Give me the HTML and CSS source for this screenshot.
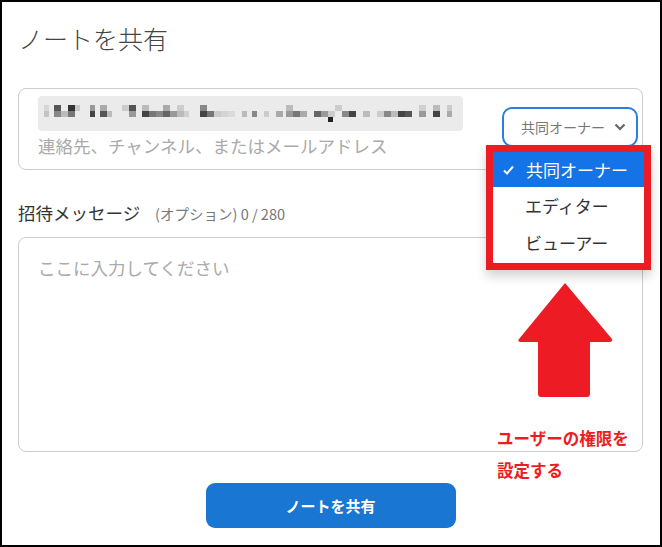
FILE: index.html
```html
<!DOCTYPE html>
<html lang="ja">
<head>
    <meta charset="UTF-8">
    <title>ノートを共有</title>
    <link rel="stylesheet" href="styles.css">
</head>
<body>
    <div class="frame">
        <h1 class="title">ノートを共有</h1>

        <div class="recipient">
            <div class="recipient-left">
                <svg class="blurred" width="425" height="35" viewBox="0 0 425 35">
                    <rect x="0" y="0" width="425" height="35" rx="4" fill="#ebebeb"/>
                    <rect x="6" y="9" width="5" height="6" fill="#d6d6d6"/>
                    <rect x="6" y="15" width="5" height="6" fill="#c4c4c4"/>
                    <rect x="16" y="9" width="7" height="6" fill="#555"/>
                    <rect x="16" y="15" width="7" height="6" fill="#888"/>
                    <rect x="23" y="15" width="7" height="6" fill="#bbb"/>
                    <rect x="30" y="9" width="7" height="6" fill="#333"/>
                    <rect x="30" y="15" width="7" height="6" fill="#777"/>
                    <rect x="37" y="9" width="5" height="6" fill="#c8c8c8"/>
                    <rect x="52" y="9" width="5" height="6" fill="#999"/>
                    <rect x="52" y="15" width="5" height="6" fill="#444"/>
                    <rect x="62" y="9" width="7" height="6" fill="#aaa"/>
                    <rect x="62" y="15" width="7" height="6" fill="#555"/>
                    <rect x="69" y="15" width="5" height="6" fill="#bbb"/>
                    <rect x="84" y="9" width="7" height="6" fill="#ccc"/>
                    <rect x="91" y="9" width="7" height="6" fill="#555"/>
                    <rect x="91" y="15" width="7" height="6" fill="#999"/>
                    <rect x="104" y="9" width="7" height="6" fill="#bbb"/>
                    <rect x="104" y="15" width="7" height="6" fill="#444"/>
                    <rect x="111" y="15" width="7" height="6" fill="#777"/>
                    <rect x="118" y="15" width="7" height="6" fill="#888"/>
                    <rect x="125" y="9" width="7" height="6" fill="#aaa"/>
                    <rect x="125" y="15" width="7" height="6" fill="#666"/>
                    <rect x="132" y="15" width="7" height="6" fill="#999"/>
                    <rect x="139" y="9" width="7" height="6" fill="#ccc"/>
                    <rect x="139" y="15" width="7" height="6" fill="#bbb"/>
                    <rect x="146" y="15" width="5" height="6" fill="#d0d0d0"/>
                    <rect x="162" y="9" width="7" height="6" fill="#888"/>
                    <rect x="162" y="15" width="7" height="6" fill="#444"/>
                    <rect x="169" y="15" width="7" height="6" fill="#777"/>
                    <rect x="176" y="15" width="7" height="6" fill="#ccc"/>
                    <rect x="183" y="15" width="7" height="6" fill="#d4d4d4"/>
                    <rect x="190" y="15" width="7" height="6" fill="#dadada"/>
                    <rect x="204" y="15" width="5" height="6" fill="#bbb"/>
                    <rect x="214" y="15" width="5" height="6" fill="#888"/>
                    <rect x="226" y="15" width="5" height="6" fill="#ccc"/>
                    <rect x="238" y="15" width="7" height="6" fill="#aaa"/>
                    <rect x="248" y="9" width="7" height="6" fill="#bbb"/>
                    <rect x="248" y="15" width="7" height="6" fill="#999"/>
                    <rect x="255" y="15" width="7" height="6" fill="#777"/>
                    <rect x="262" y="15" width="7" height="6" fill="#aaa"/>
                    <rect x="276" y="15" width="7" height="6" fill="#666"/>
                    <rect x="283" y="15" width="7" height="6" fill="#999"/>
                    <rect x="290" y="15" width="7" height="6" fill="#ccc"/>
                    <rect x="290" y="21" width="5" height="5" fill="#222"/>
                    <rect x="297" y="9" width="7" height="6" fill="#ccc"/>
                    <rect x="304" y="15" width="7" height="6" fill="#888"/>
                    <rect x="311" y="15" width="7" height="6" fill="#444"/>
                    <rect x="325" y="15" width="7" height="6" fill="#bbb"/>
                    <rect x="339" y="15" width="7" height="6" fill="#ccc"/>
                    <rect x="346" y="15" width="7" height="6" fill="#888"/>
                    <rect x="353" y="15" width="7" height="6" fill="#bbb"/>
                    <rect x="360" y="15" width="7" height="6" fill="#444"/>
                    <rect x="367" y="15" width="7" height="6" fill="#555"/>
                    <rect x="381" y="9" width="7" height="6" fill="#d0d0d0"/>
                    <rect x="381" y="15" width="7" height="6" fill="#999"/>
                    <rect x="395" y="9" width="7" height="6" fill="#bbb"/>
                    <rect x="395" y="15" width="7" height="6" fill="#444"/>
                    <rect x="409" y="9" width="5" height="6" fill="#ccc"/>
                    <rect x="409" y="15" width="5" height="6" fill="#aaa"/>
                </svg>
                <div class="recipient-placeholder">連絡先、チャンネル、またはメールアドレス</div>
            </div>
            <div class="role-select">
                <span>共同オーナー</span>
                <svg width="12" height="8" viewBox="0 0 12 8"><polyline points="1.5,1.5 6,6 10.5,1.5" fill="none" stroke="#666" stroke-width="2.2"/></svg>
            </div>

            <ul class="role-menu">
                <li class="role-item selected">
                    <svg class="check" width="11" height="10" viewBox="0 0 11 10"><polyline points="1,5.5 4,8.5 10,1.5" fill="none" stroke="#fff" stroke-width="2"/></svg>
                    共同オーナー
                </li>
                <li class="role-item">エディター</li>
                <li class="role-item">ビューアー</li>
            </ul>
        </div>

        <div class="message-label">招待メッセージ <span class="message-hint">(オプション) 0 / 280</span></div>
        <textarea class="message" placeholder="ここに入力してください"></textarea>

        <div class="actions">
            <button class="share-button">ノートを共有</button>
        </div>

        <svg class="note-arrow" width="97" height="116" viewBox="0 0 97 116">
            <path d="M48 1 L95 57 Q96 60 92 60 L73 60 L73 112 Q73 115 70 115 L24 115 Q21 115 21 112 L21 60 L4 60 Q0 60 2 57 Z" fill="#ed1c24"/>
        </svg>
        <div class="note-text">ユーザーの権限を<br>設定する</div>
    </div>
</body>
</html>
```

FILE: styles.css
```css
* {
    margin: 0;
    padding: 0;
    box-sizing: border-box;
    font-family: "Noto Sans CJK JP", "Noto Sans", sans-serif;
}

body {
    background: #fff;
}

.frame {
    position: relative;
    width: 662px;
    height: 547px;
    border: 2px solid #000;
    padding: 20px 17px 0 16px;
    color: #333;
}

.title {
    font-size: 25px;
    font-weight: 300;
    line-height: 32px;
    color: #444;
    margin-bottom: 34px;
}

.recipient {
    position: relative;
    display: flex;
    height: 82px;
    border: 1px solid #ccc;
    border-radius: 8px;
    padding: 7px 4px 0 19px;
}

.recipient-left {
    flex: 1;
}

.blurred {
    display: block;
}

.recipient-placeholder {
    margin-top: 3px;
    font-size: 17.5px;
    line-height: 24px;
    color: #aaa;
}

.role-select {
    display: flex;
    align-items: center;
    gap: 9px;
    width: 136px;
    height: 40px;
    margin-top: 11px;
    padding-left: 17px;
    border: 2px solid #2a7de1;
    border-radius: 10px;
    font-size: 14px;
    color: #777;
}

.role-menu {
    position: absolute;
    left: 467px;
    top: 56px;
    width: 165px;
    height: 125px;
    list-style: none;
    background: #fff;
    border: 7px solid #ed1c24;
    box-shadow: 0 6px 10px rgba(0, 0, 0, 0.18);
}

.role-item {
    display: flex;
    align-items: center;
    height: 37px;
    padding-left: 32px;
    font-size: 17px;
    color: #333;
}

.role-item.selected {
    background: #1473e6;
    color: #fff;
    padding-left: 10px;
    height: 35px;
}

.check {
    margin-right: 12px;
}

.message-label {
    margin-top: 31px;
    font-size: 17.5px;
    line-height: 24px;
    color: #333;
}

.message-hint {
    margin-left: 11px;
    font-size: 14.5px;
    color: #777;
}

.message {
    display: block;
    width: 100%;
    height: 215px;
    margin-top: 11px;
    padding: 18px 19px;
    border: 1px solid #ccc;
    border-radius: 8px;
    resize: none;
    font-size: 17.5px;
    line-height: 24px;
    outline: none;
}

.message::placeholder {
    color: #aaa;
}

.actions {
    display: flex;
    justify-content: center;
    margin-top: 31px;
}

.share-button {
    width: 250px;
    height: 45px;
    border: none;
    border-radius: 9px;
    background: #1976d2;
    color: #fff;
    font-size: 15px;
    font-weight: 700;
}

.note-arrow {
    position: absolute;
    left: 515px;
    top: 280px;
}

.note-text {
    position: absolute;
    left: 495px;
    top: 420px;
    font-size: 16.5px;
    font-weight: 700;
    line-height: 32px;
    color: #ed1c24;
}
```
